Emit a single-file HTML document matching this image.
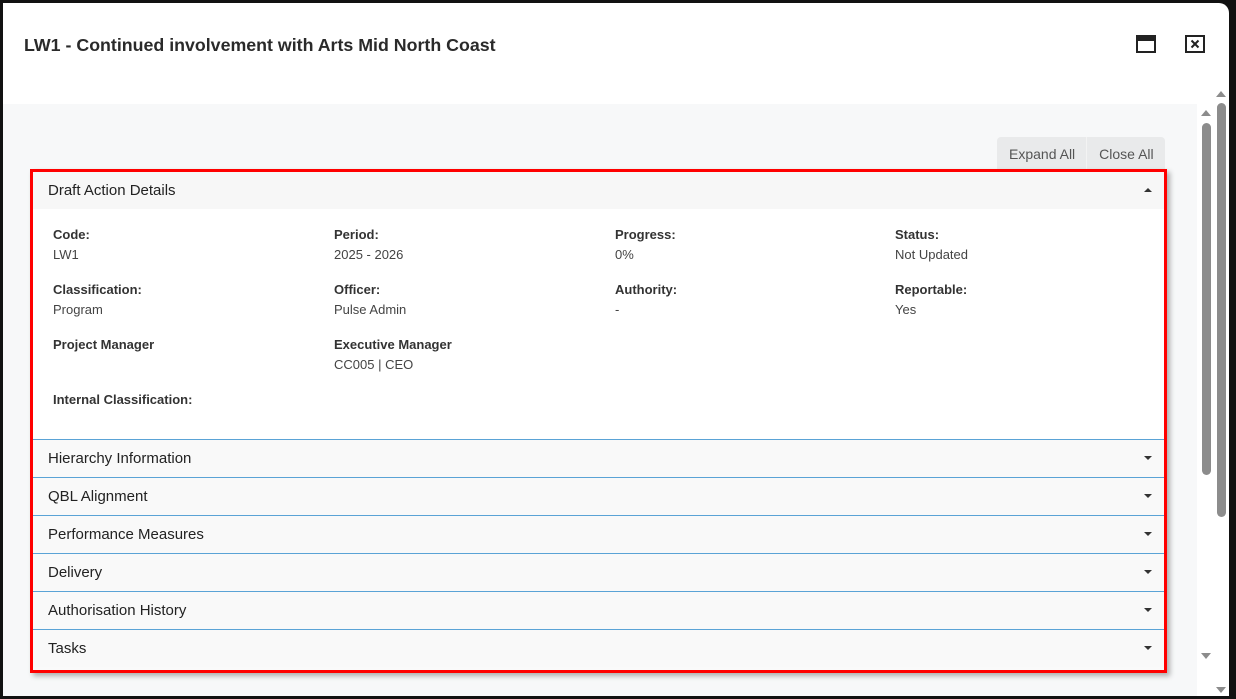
<!DOCTYPE html>
<html><head><style>
*{margin:0;padding:0;box-sizing:border-box}
body{width:1236px;height:699px;background:#111;position:relative;overflow:hidden;font-family:"Liberation Sans",sans-serif;color:#222}
.win{position:absolute;left:3px;top:3px;width:1226px;height:693px;background:#fff;border-radius:0 10px 0 0;overflow:hidden}
.title{position:absolute;left:21px;top:32px;font-size:17.8px;font-weight:bold;color:#2a2a2a}
.body{position:absolute;left:0;top:101px;width:1194px;height:592px;background:#f7f8f9}
.btns{position:absolute;left:994px;top:134px;height:34px;display:flex;background:#e9eaeb;border-radius:4px 4px 0 0;font-size:14px;color:#555}
.btns div{padding:0 11px 0 12px;line-height:34px}
.btns div:first-child{border-right:1px solid #f3f3f3}
.red{position:absolute;left:27px;top:166px;width:1137px;height:504px;border:3px solid #f00;background:#fafafa;box-shadow:3px 3px 5px rgba(0,0,0,.3)}
.hd{height:37px;background:#f7f7f7;padding-left:15px;line-height:37px;font-size:15px;position:relative}
.c{position:absolute;right:12px;top:16px;width:0;height:0;border-left:4px solid transparent;border-right:4px solid transparent}
.up{border-bottom:4px solid #333}
.dn{border-top:4px solid #333}
.content{height:230px;background:#fff;position:relative}
.f{position:absolute;font-size:13px;color:#444}
.f b{display:block;margin-bottom:5px;color:#333}
.row{height:38px;border-top:1px solid #5aa3d6;padding-left:15px;line-height:37px;font-size:15px;position:relative;background:#f9f9f9}
.sb{position:absolute;width:9px;background:#8c8c8c;border-radius:5px}
</style></head><body>
<div class="win">
<div class="title">LW1 - Continued involvement with Arts Mid North Coast</div>
<svg style="position:absolute;left:1133px;top:32px" width="20" height="18"><rect x="1" y="1" width="18" height="16" fill="#fff" stroke="#222" stroke-width="2"/><rect x="1" y="1" width="18" height="5" fill="#222"/></svg>
<svg style="position:absolute;left:1182px;top:32px" width="20" height="18"><rect x="1" y="1" width="18" height="16" fill="#fff" stroke="#222" stroke-width="2"/><path d="M6.5 5.5l7 7M13.5 5.5l-7 7" stroke="#222" stroke-width="2"/></svg>
<div class="body"></div>
<div class="btns"><div>Expand All</div><div>Close All</div></div>
<div class="red">
<div class="hd">Draft Action Details<span class="c up"></span></div>
<div class="content">
<div class="f" style="left:20px;top:18px"><b>Code:</b>LW1</div>
<div class="f" style="left:301px;top:18px"><b>Period:</b>2025 - 2026</div>
<div class="f" style="left:582px;top:18px"><b>Progress:</b>0%</div>
<div class="f" style="left:862px;top:18px"><b>Status:</b>Not Updated</div>
<div class="f" style="left:20px;top:73px"><b>Classification:</b>Program</div>
<div class="f" style="left:301px;top:73px"><b>Officer:</b>Pulse Admin</div>
<div class="f" style="left:582px;top:73px"><b>Authority:</b>-</div>
<div class="f" style="left:862px;top:73px"><b>Reportable:</b>Yes</div>
<div class="f" style="left:20px;top:128px"><b>Project Manager</b></div>
<div class="f" style="left:301px;top:128px"><b>Executive Manager</b>CC005 | CEO</div>
<div class="f" style="left:20px;top:183px"><b>Internal Classification:</b></div>
</div>
<div class="row">Hierarchy Information<span class="c dn"></span></div>
<div class="row">QBL Alignment<span class="c dn"></span></div>
<div class="row">Performance Measures<span class="c dn"></span></div>
<div class="row">Delivery<span class="c dn"></span></div>
<div class="row">Authorisation History<span class="c dn"></span></div>
<div class="row">Tasks<span class="c dn"></span></div>
</div>
<div class="sb" style="left:1199px;top:120px;height:352px"></div>
<div class="sb" style="left:1214px;top:100px;height:414px"></div>
<div style="position:absolute;left:1198px;top:107px;border:5px solid transparent;border-bottom:6px solid #8c8c8c;border-top:0"></div>
<div style="position:absolute;left:1213px;top:88px;border:5px solid transparent;border-bottom:6px solid #8c8c8c;border-top:0"></div>
<div style="position:absolute;left:1198px;top:650px;border:5px solid transparent;border-top:6px solid #8c8c8c;border-bottom:0"></div>
<div style="position:absolute;left:1213px;top:684px;border:5px solid transparent;border-top:6px solid #8c8c8c;border-bottom:0"></div>
</div>
</body></html>
